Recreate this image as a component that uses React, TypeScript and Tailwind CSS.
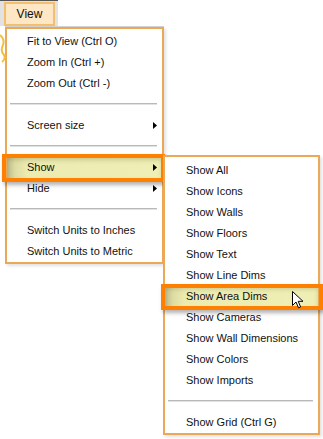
import type { ReactNode } from 'react'

function Arrow() {
  return (
    <svg width="4" height="7" viewBox="0 0 4 7" className="ml-auto">
      <path d="M0 0 L4 3.5 L0 7 Z" fill="#000" />
    </svg>
  )
}

function Row({ children, sub, pl = 'pl-[20px]' }: { children: ReactNode; sub?: boolean; pl?: string }) {
  return (
    <div className={`flex h-[21px] items-center pr-[5px] ${pl}`}>
      <span>{children}</span>
      {sub && <Arrow />}
    </div>
  )
}

function HotRow({ children, sub, pl, frame }: { children: ReactNode; sub?: boolean; pl: string; frame: string }) {
  return (
    <div
      className={`relative flex h-[21px] items-center pr-[5px] ${pl} bg-[linear-gradient(to_right,#bdbb8c_0px,#dedca2_8px,#ecebb0_20px,#efeeb4_100%)] shadow-[inset_0_3px_4px_rgba(90,90,40,0.25)]`}
    >
      <span className="relative">{children}</span>
      {sub && <Arrow />}
      <span className={`pointer-events-none absolute border-4 border-[#ff8000] shadow-[2px_3px_4px_rgba(0,0,0,0.3)] ${frame}`} />
    </div>
  )
}

function Separator() {
  return <div className="mb-[10px] ml-[3px] mr-[5px] mt-[9px] h-[2px] border-t border-[#b9b9b9] bg-[#e2e2e2]" />
}

export default function App() {
  const subItems = [
    'Show All',
    'Show Icons',
    'Show Walls',
    'Show Floors',
    'Show Text',
    'Show Line Dims',
  ]
  const subItems2 = ['Show Cameras', 'Show Wall Dimensions', 'Show Colors', 'Show Imports']

  return (
    <div className="relative h-[439px] w-[323px] overflow-hidden bg-white font-['Liberation_Sans',Arial,sans-serif] text-[11px] text-[#111]">
      {/* bits of the drawing behind the menu */}
      <svg className="absolute left-0 top-[33px]" width="6" height="30" viewBox="0 0 6 30">
        <path d="M0 2 Q5 6 3 12 Q0 18 4 22 Q6 26 2 29" stroke="#f0c040" strokeWidth="2" fill="none" />
      </svg>

      {/* menu bar */}
      <div className="h-[26px] w-[58px] border-t border-[#555] bg-[#e2e2e2] pl-[4px] pt-[1px]">
        <div className="flex h-[24px] w-[51px] items-center justify-center border-2 border-[#f3bf6f] bg-[#fde7c4] text-[12px]">
          View
        </div>
      </div>

      {/* View menu */}
      <div className="ml-[5px] w-[159px]">
        <div className="h-px bg-[#d2d2d2]" />
        <div className="border-2 border-[#eba957] bg-white pt-[2px] shadow-[2px_2px_3px_rgba(0,0,0,0.12)]">
          <Row>Fit to View (Ctrl O)</Row>
          <Row>Zoom In (Ctrl +)</Row>
          <Row>Zoom Out (Ctrl -)</Row>
          <Separator />
          <Row sub>Screen size</Row>
          <Separator />
          <HotRow sub pl="pl-[20px]" frame="-top-[3px] -bottom-[4px] -left-[5px] -right-[3px]">
            Show
          </HotRow>
          <Row sub>Hide</Row>
          <Separator />
          <Row>Switch Units to Inches</Row>
          <Row>Switch Units to Metric</Row>
        </div>
      </div>

      {/* Show submenu */}
      <div className="absolute left-[163px] top-[155px] w-[157px] border-2 border-[#eba957] bg-white pt-[3px] shadow-[2px_2px_3px_rgba(0,0,0,0.12)]">
        {subItems.map((s) => (
          <Row key={s} pl="pl-[21px]">
            {s}
          </Row>
        ))}
        <HotRow pl="pl-[21px]" frame="-top-[2px] -bottom-[3px] -left-[4px] -right-[5px]">
          Show Area Dims
        </HotRow>
        {subItems2.map((s) => (
          <Row key={s} pl="pl-[21px]">
            {s}
          </Row>
        ))}
        <Separator />
        <Row pl="pl-[21px]">Show Grid (Ctrl G)</Row>
      </div>

      {/* mouse pointer */}
      <svg className="absolute left-[292px] top-[291px]" width="12" height="18" viewBox="0 0 12 18">
        <path
          d="M0.5 0.5 L0.5 14.5 L4 11 L6.5 16.8 L8.6 15.9 L6.2 10.3 L11 10.3 Z"
          fill="#fff"
          stroke="#000"
          strokeWidth="1"
          strokeLinejoin="miter"
        />
      </svg>
    </div>
  )
}
